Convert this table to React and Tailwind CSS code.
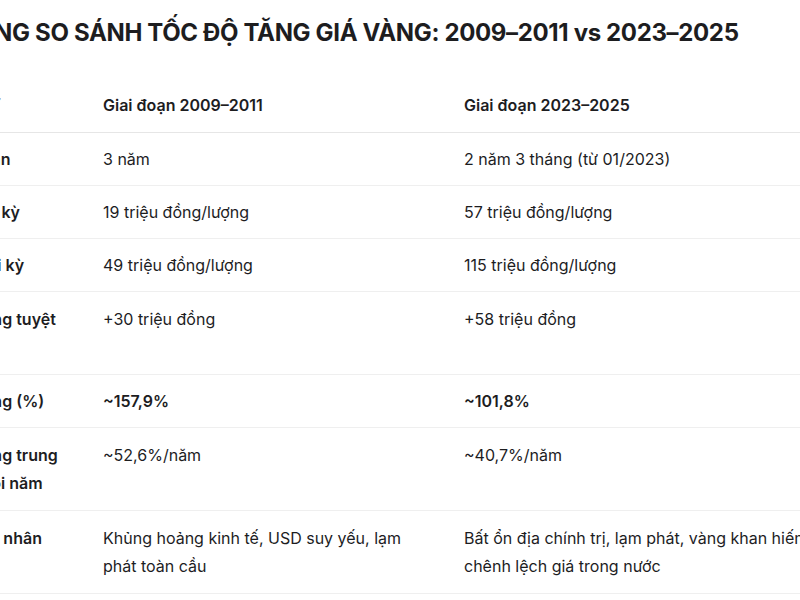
import React from "react";

const rows = [
  { label: ["Thời gian"], a: "3 năm", b: "2 năm 3 tháng (từ 01/2023)" },
  { label: ["Giá đầu kỳ"], a: "19 triệu đồng/lượng", b: "57 triệu đồng/lượng" },
  { label: ["Giá cuối kỳ"], a: "49 triệu đồng/lượng", b: "115 triệu đồng/lượng" },
  { label: ["Mức tăng tuyệt", "đối"], a: "+30 triệu đồng", b: "+58 triệu đồng" },
  { label: ["Mức tăng (%)"], a: "~157,9%", b: "~101,8%", bold: true },
  { label: ["Mức tăng trung", "bình mỗi năm"], a: "~52,6%/năm", b: "~40,7%/năm" },
  {
    label: ["Nguyên nhân"],
    a: ["Khủng hoảng kinh tế, USD suy yếu, lạm", "phát toàn cầu"],
    b: ["Bất ổn địa chính trị, lạm phát, vàng khan hiếm,", "chênh lệch giá trong nước"],
  },
];

const Lines = ({ value }) =>
  Array.isArray(value)
    ? value.map((line, i) => (
        <span key={i} className="block">
          {line}
        </span>
      ))
    : value;

export default function App() {
  return (
    <div
      className="w-[800px] h-[600px] overflow-hidden bg-white text-[#1d1d1f]"
      style={{ fontFamily: "Inter, 'Noto Sans', sans-serif" }}
    >
      <div className="-ml-[77px] w-[940px]">
        <h1 className="pl-[38px] pt-[17px] pb-[29px] text-[24px] leading-[32px] font-bold tracking-[-0.35px] whitespace-nowrap">
          BẢNG SO SÁNH TỐC ĐỘ TĂNG GIÁ VÀNG: 2009–2011 vs 2023–2025
        </h1>

        <table className="table-fixed border-collapse text-[16px] leading-[28px]">
          <colgroup>
            <col className="w-[164px]" />
            <col className="w-[361px]" />
            <col className="w-[400px]" />
          </colgroup>
          <thead>
            <tr className="border-b border-[#e6e6e6] text-left">
              <th className="px-4 py-[13px] font-semibold whitespace-nowrap">Tiêu chí</th>
              <th className="px-4 py-[13px] font-semibold">Giai đoạn 2009–2011</th>
              <th className="px-4 py-[13px] font-semibold">Giai đoạn 2023–2025</th>
            </tr>
          </thead>
          <tbody>
            {rows.map((row, i) => {
              const tall = row.label.length > 1 || Array.isArray(row.a);
              const pad = tall ? "py-[13px]" : "py-3";
              return (
                <tr key={i} className="border-b border-[#efefef] align-top">
                  <td className={`px-4 ${pad} font-semibold whitespace-nowrap`}>
                    <Lines value={row.label} />
                  </td>
                  <td className={`px-4 ${pad} ${row.bold ? "font-semibold" : ""}`}>
                    <Lines value={row.a} />
                  </td>
                  <td className={`px-4 ${pad} whitespace-nowrap ${row.bold ? "font-semibold" : ""}`}>
                    <Lines value={row.b} />
                  </td>
                </tr>
              );
            })}
          </tbody>
        </table>
      </div>
    </div>
  );
}
